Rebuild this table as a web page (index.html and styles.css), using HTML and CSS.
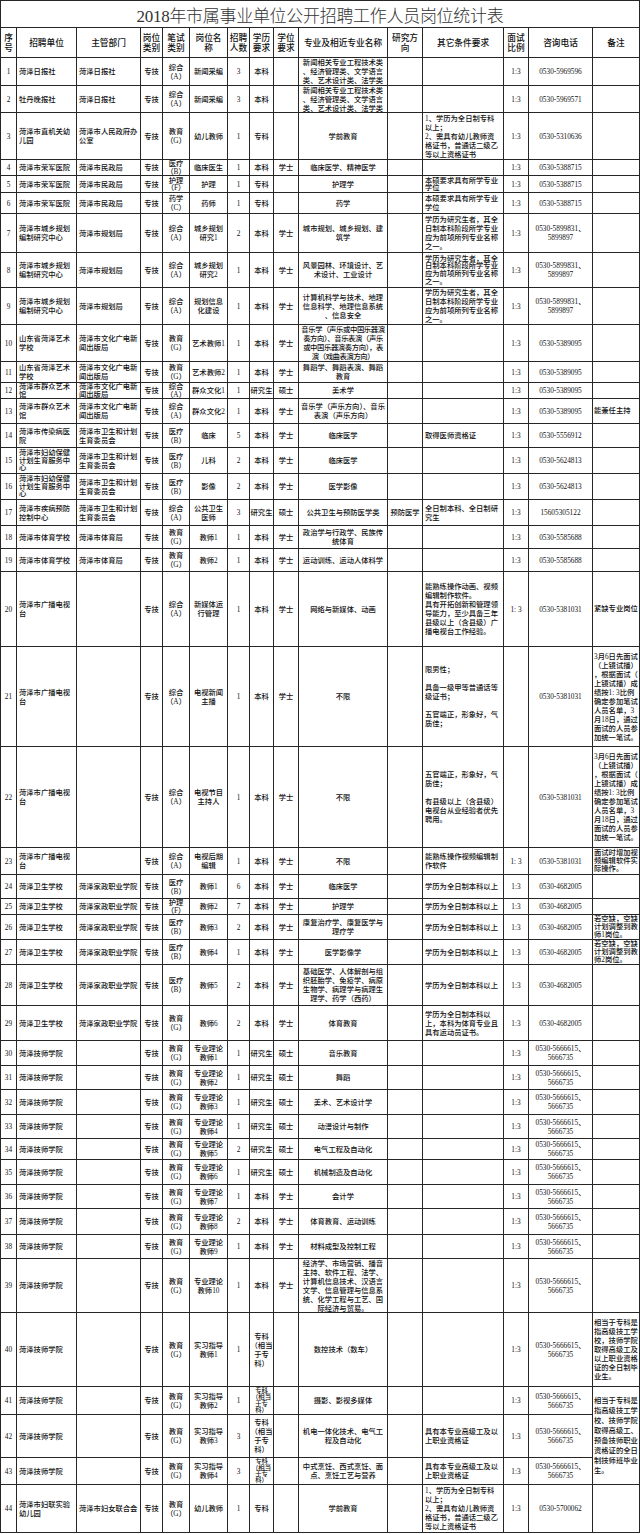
FILE: index.html
```html
<!DOCTYPE html>
<html lang="zh-CN">
<head>
<meta charset="utf-8">
<title>2018年市属事业单位公开招聘工作人员岗位统计表</title>
<link rel="stylesheet" href="styles.css">
</head>
<body>
<div class="sheet">
  <div class="title">2018年市属事业单位公开招聘工作人员岗位统计表</div>
  <div class="r hd">
    <div>序<br>号</div><div>招聘单位</div><div>主管部门</div><div>岗位<br>类别</div><div>笔试<br>类别</div><div>岗位名<br>称</div><div>招聘<br>人数</div><div>学历<br>要求</div><div>学位<br>要求</div><div>专业及相近专业名称</div><div>研究方<br>向</div><div>其它条件要求</div><div>面试<br>比例</div><div>咨询电话</div><div>备注</div>
  </div>
  <div class="r"><div>1</div><div>菏泽日报社</div><div>菏泽日报社</div><div>专技</div><div>综合（A）</div><div>新闻采编</div><div>3</div><div>本科</div><div></div><div>新闻相关专业工程技术类、经济管理类、文学语言类、艺术设计类、法学类</div><div></div><div></div><div>1:3</div><div>0530-5969596</div><div></div></div>
  <div class="r"><div>2</div><div>牡丹晚报社</div><div>菏泽日报社</div><div>专技</div><div>综合（A）</div><div>新闻采编</div><div>3</div><div>本科</div><div></div><div>新闻相关专业工程技术类、经济管理类、文学语言类、艺术设计类、法学类</div><div></div><div></div><div>1:3</div><div>0530-5969571</div><div></div></div>
  <div class="r"><div>3</div><div>菏泽市直机关幼儿园</div><div>菏泽市人民政府办公室</div><div>专技</div><div>教育（G）</div><div>幼儿教师</div><div>1</div><div>专科</div><div></div><div>学前教育</div><div></div><div>1、学历为全日制专科<br>以上；<br>2、需具有幼儿教师资格证书，普通话二级乙等以上资格证书</div><div>1:3</div><div>0530-5310636</div><div></div></div>
  <div class="r"><div>4</div><div>菏泽市荣军医院</div><div>菏泽市民政局</div><div>专技</div><div class="sq2">医疗（B）</div><div>临床医生</div><div>1</div><div>本科</div><div>学士</div><div>临床医学、精神医学</div><div></div><div></div><div>1:3</div><div>0530-5388715</div><div></div></div>
  <div class="r"><div>5</div><div>菏泽市荣军医院</div><div>菏泽市民政局</div><div>专技</div><div class="sq2">护理（F）</div><div>护理</div><div>1</div><div>专科</div><div></div><div>护理学</div><div></div><div class="sq2">本硕要求具有所学专业学位</div><div>1:3</div><div>0530-5388715</div><div></div></div>
  <div class="r"><div>6</div><div>菏泽市荣军医院</div><div>菏泽市民政局</div><div>专技</div><div>药学（C）</div><div>药师</div><div>1</div><div>专科</div><div></div><div>药学</div><div></div><div>本硕要求具有所学专业学位</div><div>1:3</div><div>0530-5388715</div><div></div></div>
  <div class="r"><div>7</div><div>菏泽市城乡规划编制研究中心</div><div>菏泽市规划局</div><div>专技</div><div>综合（A）</div><div>城乡规划研究1</div><div>2</div><div>本科</div><div>学士</div><div>城市规划、城乡规划、建筑学</div><div></div><div>学历为研究生者，其全日制本科阶段所学专业应为前项所列专业名称之一。</div><div>1:3</div><div>0530-5899831、5899897</div><div></div></div>
  <div class="r"><div>8</div><div>菏泽市城乡规划编制研究中心</div><div>菏泽市规划局</div><div>专技</div><div>综合（A）</div><div>城乡规划研究2</div><div>1</div><div>本科</div><div>学士</div><div>风景园林、环境设计、艺术设计、工业设计</div><div></div><div class="sq3">学历为研究生者，其全日制本科阶段所学专业应为前项所列专业名称之一。</div><div>1:3</div><div>0530-5899831、5899897</div><div></div></div>
  <div class="r"><div>9</div><div>菏泽市城乡规划编制研究中心</div><div>菏泽市规划局</div><div>专技</div><div>综合（A）</div><div>规划信息化建设</div><div>1</div><div>本科</div><div>学士</div><div>计算机科学与技术、地理信息科学、地理信息系统、信息安全</div><div></div><div>学历为研究生者，其全日制本科阶段所学专业应为前项所列专业名称之一。</div><div>1:3</div><div>0530-5899831、5899897</div><div></div></div>
  <div class="r"><div>10</div><div>山东省菏泽艺术学校</div><div>菏泽市文化广电新闻出版局</div><div>专技</div><div>教育（G）</div><div>艺术教师1</div><div>1</div><div>本科</div><div>学士</div><div class="tight">音乐学（声乐或中国乐器演奏方向）、音乐表演（声乐或中国乐器演奏方向），表演（戏曲表演方向）</div><div></div><div></div><div>1:3</div><div>0530-5389095</div><div></div></div>
  <div class="r"><div>11</div><div>山东省菏泽艺术学校</div><div>菏泽市文化广电新闻出版局</div><div>专技</div><div>教育（G）</div><div>艺术教师2</div><div>1</div><div>本科</div><div>学士</div><div>舞蹈学、舞蹈表演、舞蹈教育</div><div></div><div></div><div>1:3</div><div>0530-5389095</div><div></div></div>
  <div class="r"><div>12</div><div class="sq2">菏泽市群众艺术馆</div><div class="sq2">菏泽市文化广电新闻出版局</div><div>专技</div><div class="sq2">综合（A）</div><div>群众文化1</div><div>1</div><div>研究生</div><div>硕士</div><div>美术学</div><div></div><div></div><div>1:3</div><div>0530-5389095</div><div></div></div>
  <div class="r"><div>13</div><div>菏泽市群众艺术馆</div><div>菏泽市文化广电新闻出版局</div><div>专技</div><div>综合（A）</div><div>群众文化2</div><div>1</div><div>本科</div><div>学士</div><div>音乐学（声乐方向）、音乐表演（声乐方向）</div><div></div><div></div><div>1:3</div><div>0530-5389095</div><div>能兼任主持</div></div>
  <div class="r"><div>14</div><div>菏泽市传染病医院</div><div>菏泽市卫生和计划生育委员会</div><div>专技</div><div>医疗（B）</div><div>临床</div><div>5</div><div>本科</div><div>学士</div><div>临床医学</div><div></div><div>取得医师资格证</div><div>1:3</div><div>0530-5556912</div><div></div></div>
  <div class="r"><div>15</div><div class="sq3">菏泽市妇幼保健计划生育服务中心</div><div>菏泽市卫生和计划生育委员会</div><div>专技</div><div>医疗（B）</div><div>儿科</div><div>2</div><div>本科</div><div>学士</div><div>临床医学</div><div></div><div></div><div>1:3</div><div>0530-5624813</div><div></div></div>
  <div class="r"><div>16</div><div class="sq3">菏泽市妇幼保健计划生育服务中心</div><div>菏泽市卫生和计划生育委员会</div><div>专技</div><div>医疗（B）</div><div>影像</div><div>2</div><div>本科</div><div>学士</div><div>医学影像</div><div></div><div></div><div>1:3</div><div>0530-5624813</div><div></div></div>
  <div class="r"><div>17</div><div>菏泽市疾病预防控制中心</div><div>菏泽市卫生和计划生育委员会</div><div>专技</div><div>综合（A）</div><div>公共卫生医师</div><div>3</div><div>研究生</div><div>硕士</div><div>公共卫生与预防医学类</div><div>预防医学</div><div>全日制本科、全日制研究生</div><div>1:3</div><div>15605305122</div><div></div></div>
  <div class="r"><div>18</div><div>菏泽市体育学校</div><div>菏泽市体育局</div><div>专技</div><div>教育（G）</div><div>教师1</div><div>1</div><div>本科</div><div>学士</div><div>政治学与行政学、民族传统体育</div><div></div><div></div><div>1:3</div><div>0530-5585688</div><div></div></div>
  <div class="r"><div>19</div><div>菏泽市体育学校</div><div>菏泽市体育局</div><div>专技</div><div>教育（G）</div><div>教师2</div><div>1</div><div>本科</div><div>学士</div><div>运动训练、运动人体科学</div><div></div><div></div><div>1:3</div><div>0530-5585688</div><div></div></div>
  <div class="r"><div>20</div><div>菏泽市广播电视台</div><div></div><div>专技</div><div>综合（A）</div><div>新媒体运行管理</div><div>1</div><div>本科</div><div>学士</div><div>网络与新媒体、动画</div><div></div><div>能熟练操作动画、视频编辑制作软件。<br>具有开拓创新和管理领导能力，至少具备三年县级以上（含县级）广播电视台工作经验。</div><div>1: 3</div><div>0530-5381031</div><div>紧缺专业岗位</div></div>
  <div class="r"><div>21</div><div>菏泽市广播电视台</div><div></div><div>专技</div><div>综合（A）</div><div>电视新闻主播</div><div>1</div><div>本科</div><div>学士</div><div>不限</div><div></div><div>限男性；<br><br>具备一级甲等普通话等级证书；<br><br>五官端正，形象好，气质佳；</div><div></div><div>0530-5381031</div><div class="long">3月6日先面试（上镜试播），根据面试（上镜试播）成绩按1: 3比例确定参加笔试人员名单，3月18日，通过面试的人员参加统一笔试。</div></div>
  <div class="r"><div>22</div><div>菏泽市广播电视台</div><div></div><div>专技</div><div>综合（A）</div><div>电视节目主持人</div><div>1</div><div>本科</div><div>学士</div><div>不限</div><div></div><div>五官端正，形象好，气质佳；<br><br>有县级以上（含县级）电视台从业经验者优先聘用。</div><div></div><div>0530-5381031</div><div class="long">3月6日先面试（上镜试播），根据面试（上镜试播）成绩按1: 3比例确定参加笔试人员名单，3月18日，通过面试的人员参加统一笔试。</div></div>
  <div class="r"><div>23</div><div>菏泽市广播电视台</div><div></div><div>专技</div><div>综合（A）</div><div>电视后期编辑</div><div>1</div><div>本科</div><div>学士</div><div>不限</div><div></div><div>能熟练操作视频编辑制作软件</div><div>1: 3</div><div>0530-5381031</div><div class="sq3">面试时增加视频编辑软件实际操作。</div></div>
  <div class="r"><div>24</div><div>菏泽卫生学校</div><div>菏泽家政职业学院</div><div>专技</div><div>医疗（B）</div><div>教师1</div><div>6</div><div>本科</div><div>学士</div><div>临床医学</div><div></div><div>学历为全日制本科以上</div><div>1:3</div><div>0530-4682005</div><div></div></div>
  <div class="r"><div>25</div><div>菏泽卫生学校</div><div>菏泽家政职业学院</div><div>专技</div><div class="sq2">护理（F）</div><div>教师2</div><div>7</div><div>本科</div><div>学士</div><div>护理学</div><div></div><div>学历为全日制本科以上</div><div>1:3</div><div>0530-4682005</div><div></div></div>
  <div class="r"><div>26</div><div>菏泽卫生学校</div><div>菏泽家政职业学院</div><div>专技</div><div>医疗（B）</div><div>教师3</div><div>2</div><div>本科</div><div>学士</div><div>康复治疗学、康复医学与理疗学</div><div></div><div>学历为全日制本科以上</div><div>1:3</div><div>0530-4682005</div><div class="sq3">若空缺，空缺计划调整到教师1岗位。</div></div>
  <div class="r"><div>27</div><div>菏泽卫生学校</div><div>菏泽家政职业学院</div><div>专技</div><div>医疗（B）</div><div>教师4</div><div>1</div><div>本科</div><div>学士</div><div>医学影像学</div><div></div><div>学历为全日制本科以上</div><div>1:3</div><div>0530-4682005</div><div class="sq3">若空缺，空缺计划调整到教师2岗位。</div></div>
  <div class="r"><div>28</div><div>菏泽卫生学校</div><div>菏泽家政职业学院</div><div>专技</div><div>医疗（B）</div><div>教师5</div><div>2</div><div>本科</div><div>学士</div><div>基础医学、人体解剖与组织胚胎学、免疫学、病原生物学、病理学与病理生理学、药学（西药）</div><div></div><div>学历为全日制本科以上</div><div>1:3</div><div>0530-4682005</div><div></div></div>
  <div class="r"><div>29</div><div>菏泽卫生学校</div><div>菏泽家政职业学院</div><div>专技</div><div>教育（G）</div><div>教师6</div><div>2</div><div>本科</div><div>学士</div><div>体育教育</div><div></div><div>学历为全日制本科以<br>上，本科为体育专业且具有运动员证书。</div><div>1:3</div><div>0530-4682005</div><div></div></div>
  <div class="r"><div>30</div><div>菏泽技师学院</div><div></div><div>专技</div><div>教育（G）</div><div>专业理论教师1</div><div>1</div><div>研究生</div><div>硕士</div><div>音乐教育</div><div></div><div></div><div>1:3</div><div>0530-5666615、5666735</div><div></div></div>
  <div class="r"><div>31</div><div>菏泽技师学院</div><div></div><div>专技</div><div>教育（G）</div><div>专业理论教师2</div><div>1</div><div>研究生</div><div>硕士</div><div>舞蹈</div><div></div><div></div><div>1:3</div><div>0530-5666615、5666735</div><div></div></div>
  <div class="r"><div>32</div><div>菏泽技师学院</div><div></div><div>专技</div><div>教育（G）</div><div>专业理论教师3</div><div>1</div><div>研究生</div><div>硕士</div><div>美术、艺术设计学</div><div></div><div></div><div>1:3</div><div>0530-5666615、5666735</div><div></div></div>
  <div class="r"><div>33</div><div>菏泽技师学院</div><div></div><div>专技</div><div>教育（G）</div><div>专业理论教师4</div><div>1</div><div>研究生</div><div>硕士</div><div>动漫设计与制作</div><div></div><div></div><div>1:3</div><div>0530-5666615、5666735</div><div></div></div>
  <div class="r"><div>34</div><div>菏泽技师学院</div><div></div><div>专技</div><div>教育（G）</div><div>专业理论教师5</div><div>2</div><div>研究生</div><div>硕士</div><div>电气工程及自动化</div><div></div><div></div><div>1:3</div><div>0530-5666615、5666735</div><div></div></div>
  <div class="r"><div>35</div><div>菏泽技师学院</div><div></div><div>专技</div><div>教育（G）</div><div>专业理论教师6</div><div>1</div><div>研究生</div><div>硕士</div><div>机械制造及自动化</div><div></div><div></div><div>1:3</div><div>0530-5666615、5666735</div><div></div></div>
  <div class="r"><div>36</div><div>菏泽技师学院</div><div></div><div>专技</div><div>教育（G）</div><div>专业理论教师7</div><div>1</div><div>本科</div><div>学士</div><div>会计学</div><div></div><div></div><div>1:3</div><div>0530-5666615、5666735</div><div></div></div>
  <div class="r"><div>37</div><div>菏泽技师学院</div><div></div><div>专技</div><div>教育（G）</div><div>专业理论教师8</div><div>2</div><div>本科</div><div>学士</div><div>体育教育、运动训练</div><div></div><div></div><div>1:3</div><div>0530-5666615、5666735</div><div></div></div>
  <div class="r"><div>38</div><div>菏泽技师学院</div><div></div><div>专技</div><div>教育（G）</div><div>专业理论教师9</div><div>1</div><div>本科</div><div>学士</div><div>材料成型及控制工程</div><div></div><div></div><div>1:3</div><div>0530-5666615、5666735</div><div></div></div>
  <div class="r"><div>39</div><div>菏泽技师学院</div><div></div><div>专技</div><div>教育（G）</div><div>专业理论教师10</div><div>1</div><div>本科</div><div>学士</div><div>经济学、市场营销、播音主持、软件工程、法学、计算机信息技术、汉语言文学、信息管理与信息系统、化学工程与工艺、国际经济与贸易。</div><div></div><div></div><div>1:3</div><div>0530-5666615、5666735</div><div></div></div>
  <div class="r"><div>40</div><div>菏泽技师学院</div><div></div><div>专技</div><div>教育（G）</div><div>实习指导教师1</div><div>1</div><div>专科<br>（相当<br>于专<br>科）</div><div></div><div>数控技术（数车）</div><div></div><div></div><div>1:3</div><div>0530-5666615、5666735</div><div class="long">相当于专科是指高级技工学校，技师学院取得高级工及以上职业资格证的全日制毕业生。</div></div>
  <div class="r"><div>41</div><div>菏泽技师学院</div><div></div><div>专技</div><div>教育（G）</div><div>实习指导教师2</div><div>1</div><div class="sq">专科<br>（相当<br>于专<br>科）</div><div></div><div>摄影、影视多媒体</div><div></div><div></div><div>1:3</div><div>0530-5666615、5666735</div><div class="span3">相当于专科是指高级技工学校、技师学院取得高级工、预备技师职业资格证的全日制技师班毕业生。</div></div>
  <div class="r"><div>42</div><div>菏泽技师学院</div><div></div><div>专技</div><div>教育（G）</div><div>实习指导教师3</div><div>3</div><div>专科<br>（相当<br>于专<br>科）</div><div></div><div>机电一体化技术、电气工程及自动化</div><div></div><div>具有本专业高级工及以上职业资格证</div><div>1:3</div><div>0530-5666615、5666735</div></div>
  <div class="r"><div>43</div><div>菏泽技师学院</div><div></div><div>专技</div><div>教育（G）</div><div>实习指导教师4</div><div>3</div><div class="sq">专科<br>（相当<br>于专<br>科）</div><div></div><div>中式烹饪、西式烹饪、面点、烹饪工艺与营养</div><div></div><div>具有本专业高级工及以上职业资格证</div><div>1:3</div><div>0530-5666615、5666735</div></div>
  <div class="r"><div>44</div><div>菏泽市妇联实验幼儿园</div><div>菏泽市妇女联合会</div><div>专技</div><div>教育（G）</div><div>幼儿教师</div><div>1</div><div>专科</div><div></div><div>学前教育</div><div></div><div>1、学历为全日制专科<br>以上；<br>2、需具有幼儿教师资格证书，普通话二级乙等以上资格证书</div><div>1:3</div><div>0530-5700062</div><div></div></div>
</div>
</body>
</html>
```

FILE: styles.css
```css
html, body {
  margin: 0;
  padding: 0;
  background: #fff;
}

.sheet {
  width: 640px;
  box-sizing: border-box;
  display: grid;
  grid-template-columns: 15px 59px 63px 21px 26px 37px 21px 23px 24px 88px 34px 80px 24px 63px 46px;
  grid-template-rows:
    26px 29px
    27px 26px 46px 15px 16px 20px 38px 34px 36px 36px
    20px 15px 24px 23px 25px 25px 25px 22px 22px 74px
    99px 100px 26px 23px 15px 24px 24px 40px 34px 24px
    23px 24px 23px 20px 24px 23px 25px 23px 53px 73px
    27px 42px 26px 47px;
  gap: 1px;
  padding: 1px;
  background: #262626;
  color: #111;
  font-family: "Liberation Serif", "Noto Sans CJK SC", serif;
}

.title {
  grid-column: 1 / -1;
  background: #fff;
  display: flex;
  align-items: center;
  justify-content: center;
  font-size: 17px;
  font-weight: 300;
  color: #333;
  letter-spacing: -0.3px;
}

.r {
  display: contents;
}

.r > div {
  background: #fff;
  display: flex;
  align-items: center;
  justify-content: center;
  text-align: center;
  overflow: hidden;
  padding: 0 2px;
  font-size: 7.3px;
  font-weight: 500;
  line-height: 9px;
  min-width: 0;
}

/* column tweaks */
.r > div:nth-child(1) { padding: 0; }
.r > div:nth-child(5) { padding: 0; }
.r > div:nth-child(8) { padding: 0; }
.r > div:nth-child(10) { padding: 0 1px; line-break: anywhere; }

.r > div:nth-child(2),
.r > div:nth-child(3),
.r > div:nth-child(12) {
  justify-content: flex-start;
  text-align: left;
}

.r > div:nth-child(12) { line-break: anywhere; }

.r > div:nth-child(15) {
  justify-content: flex-start;
  text-align: left;
  padding: 0 0 0 1px;
  line-height: 8.4px;
  line-break: anywhere;
}

.r > div.long { line-height: 9px; }
.r > div.tight { letter-spacing: -0.35px; }
.r > div.sq { font-size: 6.3px; line-height: 6.4px; }
.r > div.sq2 { line-height: 7.4px; }
.r > div.sq3 { line-height: 7.7px; }

.r > div.span3 { grid-row: span 3; line-height: 10px; }

/* header row */
.r.hd > div {
  font-size: 8.7px;
  line-height: 10px;
  padding: 0;
  justify-content: center;
  text-align: center;
}
```
